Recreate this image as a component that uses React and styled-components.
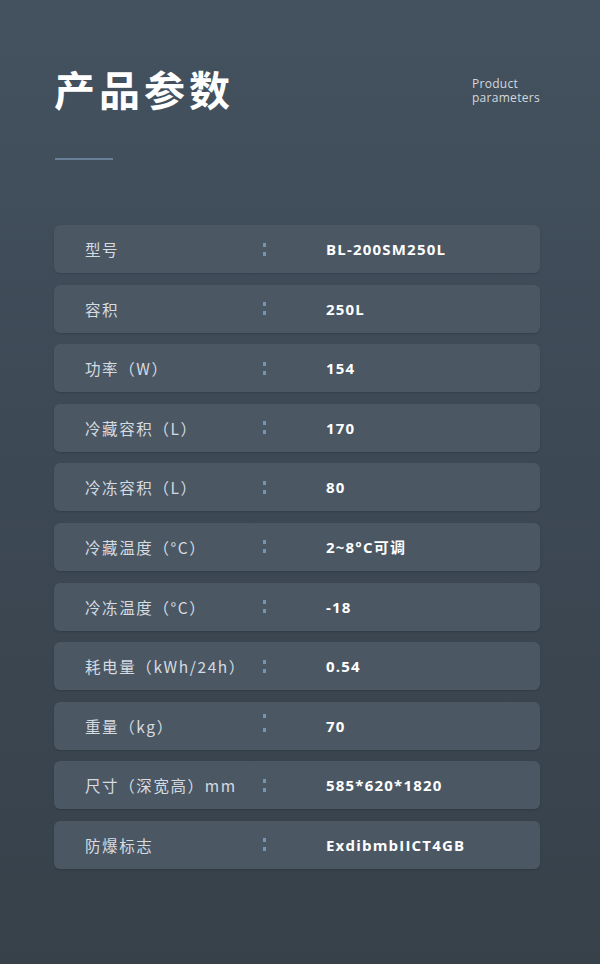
import React from "react";
import styled, { createGlobalStyle } from "styled-components";

const specs = [
  ["型号", "BL-200SM250L"],
  ["容积", "250L"],
  ["功率（W）", "154"],
  ["冷藏容积（L）", "170"],
  ["冷冻容积（L）", "80"],
  ["冷藏温度（°C）", "2~8°C可调"],
  ["冷冻温度（°C）", "-18"],
  ["耗电量（kWh/24h）", "0.54"],
  ["重量（kg）", "70", true],
  ["尺寸（深宽高）mm", "585*620*1820"],
  ["防爆标志", "ExdibmbIICT4GB"],
];

const Global = createGlobalStyle`
  html, body {
    margin: 0;
    padding: 0;
  }
  body {
    font-family: "Noto Sans CJK SC", "Noto Sans", sans-serif;
  }
`;

const Page = styled.div`
  width: 600px;
  height: 964px;
  box-sizing: border-box;
  padding: 59px 60px 0 54px;
  background: linear-gradient(180deg, #44525f 0%, #3d4955 45%, #37414a 100%);
  overflow: hidden;
`;

const Header = styled.div`
  display: flex;
  justify-content: space-between;
  align-items: flex-start;
`;

const Title = styled.h1`
  margin: 0;
  font-family: "Noto Sans CJK SC", sans-serif;
  font-size: 41px;
  font-weight: 700;
  letter-spacing: 4px;
  line-height: 58px;
  color: #ffffff;
`;

const Sub = styled.div`
  margin-top: 18px;
  font-family: "Open Sans", "Noto Sans", sans-serif;
  font-size: 12px;
  line-height: 14px;
  letter-spacing: 0.3px;
  color: #d3d8dd;
`;

const Rule = styled.div`
  width: 58px;
  height: 2px;
  margin: 41px 0 0 1px;
  background: #6a8098;
`;

const List = styled.div`
  display: flex;
  flex-direction: column;
  gap: 11.6px;
  margin-top: 65px;
  width: 486px;
`;

const Row = styled.div`
  display: grid;
  grid-template-columns: 177px 64px 1fr;
  align-items: center;
  height: 48px;
  padding-left: 31px;
  border-radius: 6px;
  background: #4b5864;
  box-shadow: 0 1px 2px rgba(0, 0, 0, 0.15);
`;

const Label = styled.span`
  font-size: 15.5px;
  letter-spacing: 1.6px;
  color: #d6dbe0;
  white-space: nowrap;
`;

const Colon = styled.span`
  display: flex;
  flex-direction: column;
  gap: ${(p) => (p.$wide ? "10px" : "5px")};
  width: 4px;
  margin: ${(p) => (p.$wide ? "-6px 0 0 1px" : "0 0 0 1px")};
  &::before,
  &::after {
    content: "";
    width: 3px;
    height: 4px;
    background: #7694b3;
  }
`;

const Value = styled.span`
  font-family: "Open Sans", "Noto Sans CJK SC", sans-serif;
  font-size: 15px;
  font-weight: 700;
  letter-spacing: 1.2px;
  color: #ffffff;
`;

export default function App() {
  return (
    <Page>
      <Global />
      <Header>
        <Title>产品参数</Title>
        <Sub>
          Product
          <br />
          parameters
        </Sub>
      </Header>
      <Rule />
      <List>
        {specs.map(([label, value, wide]) => (
          <Row key={label}>
            <Label>{label}</Label>
            <Colon $wide={wide} />
            <Value>{value}</Value>
          </Row>
        ))}
      </List>
    </Page>
  );
}
